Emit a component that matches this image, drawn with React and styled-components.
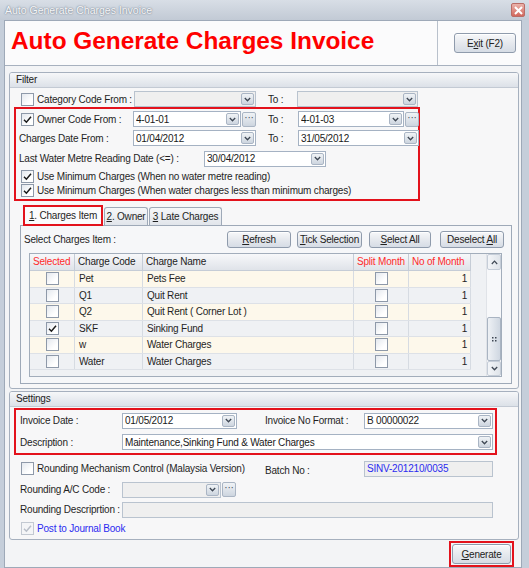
import React from 'react';
import styled, { createGlobalStyle } from 'styled-components';

const GlobalStyle = createGlobalStyle`
  html, body {
    margin: 0;
    padding: 0;
  }
  body {
    font-family: "Liberation Sans", Arial, sans-serif;
    font-size: 10px;
    letter-spacing: -0.2px;
    color: #1f1f1f;
  }
  * {
    box-sizing: border-box;
  }
`;

const items = [
  { code: 'Pet', name: 'Pets Fee', sel: false },
  { code: 'Q1', name: 'Quit Rent', sel: false },
  { code: 'Q2', name: 'Quit Rent ( Corner Lot )', sel: false },
  { code: 'SKF', name: 'Sinking Fund', sel: true },
  { code: 'w', name: 'Water Charges', sel: false },
  { code: 'Water', name: 'Water Charges', sel: false },
];

const Chevron = () => (
  <svg width="7" height="5" viewBox="0 0 7 5">
    <path d="M0.8 1 L3.5 3.8 L6.2 1" fill="none" stroke="#3f4854" strokeWidth="1.3" />
  </svg>
);

const Tick = ({ color = '#1b1b1b' }) => (
  <svg width="11" height="11" viewBox="0 0 11 11">
    <path d="M2 5.8 L4.4 8.2 L9 2.8" fill="none" stroke={color} strokeWidth="1.5" />
  </svg>
);

const CheckBox = ({ checked, disabled }) => (
  <Box $disabled={disabled}>{checked && <Tick color={disabled ? '#b8bec8' : '#1b1b1b'} />}</Box>
);

const Combo = ({ w, value, disabled, ellipsis, blue, noButton }) => (
  <ComboWrap>
    <Field $w={w} $disabled={disabled}>
      <FieldText $blue={blue}>{value}</FieldText>
      {!noButton && (
        <DropBtn>
          <Chevron />
        </DropBtn>
      )}
    </Field>
    {ellipsis && <Ellipsis>···</Ellipsis>}
  </ComboWrap>
);

const App = () => {
  return (
    <>
      <GlobalStyle />
      <Window>
        <TitleBar>
          <TitleText>Auto Generate Charges Invoice</TitleText>
          <CloseBtn>
            <svg width="9" height="9" viewBox="0 0 9 9">
              <path d="M1 1 L8 8 M8 1 L1 8" stroke="#fff" strokeWidth="2" />
            </svg>
          </CloseBtn>
        </TitleBar>

        <Client>
          <Header>
            <BigTitle>Auto Generate Charges Invoice</BigTitle>
            <ExitCell>
              <Button $w={62} $h={20}>
                <span>E<u>x</u>it (F2)</span>
              </Button>
            </ExitCell>
          </Header>

          <Content>
            <Group $h={317}>
              <GroupHeader>Filter</GroupHeader>
              <GroupBody>
                <Row $h={16} $pl={7}>
                  <LabelCell $w={113}>
                    <CheckBox />
                    <CheckText>Category Code From :</CheckText>
                  </LabelCell>
                  <Combo w={122} disabled />
                  <LabelCell $w={41} $pl={12}>To :</LabelCell>
                  <Combo w={121} disabled />
                </Row>

                <RedBox $h={94} $w={406}>
                  <Row $h={19} $pt={1}>
                    <LabelCell $w={114} $pl={2}>
                      <CheckBox checked />
                      <CheckText>Owner Code From :</CheckText>
                    </LabelCell>
                    <Combo w={108} value="4-01-01" ellipsis />
                    <LabelCell $w={42} $pl={12}>To :</LabelCell>
                    <Combo w={106} value="4-01-03" ellipsis />
                  </Row>
                  <Row $h={20}>
                    <LabelCell $w={114}>Charges Date From :</LabelCell>
                    <Combo w={123} value="01/04/2012" />
                    <LabelCell $w={42} $pl={12}>To :</LabelCell>
                    <Combo w={121} value="31/05/2012" />
                  </Row>
                  <Row $h={21}>
                    <LabelCell $w={185}>Last Water Metre Reading Date (&lt;=) :</LabelCell>
                    <Combo w={122} value="30/04/2012" />
                  </Row>
                  <Row $h={14} $pl={2}>
                    <CheckBox checked />
                    <CheckText>Use Minimum Charges (When no water metre reading)</CheckText>
                  </Row>
                  <Row $h={14} $pl={2}>
                    <CheckBox checked />
                    <CheckText>Use Minimum Charges (When water charges less than minimum charges)</CheckText>
                  </Row>
                </RedBox>

                <TabArea>
                  <TabStrip>
                    <Tab $active $w={80}>
                      <span><u>1</u>. Charges Item</span>
                    </Tab>
                    <Tab $w={44}>
                      <span><u>2</u>. Owner</span>
                    </Tab>
                    <Tab $w={73}>
                      <span><u>3</u> Late Charges</span>
                    </Tab>
                  </TabStrip>
                  <TabPanel>
                    <ToolRow>
                      <ToolLabel>Select Charges Item :</ToolLabel>
                      <Button $w={64} $h={17}>
                        <span><u>R</u>efresh</span>
                      </Button>
                      <Button $w={65} $h={17} $ml={6}>
                        <span><u>T</u>ick Selection</span>
                      </Button>
                      <Button $w={62} $h={17} $ml={7}>
                        <span><u>S</u>elect All</span>
                      </Button>
                      <Button $w={64} $h={17} $ml={9}>
                        <span>Deselect <u>A</u>ll</span>
                      </Button>
                    </ToolRow>

                    <Grid>
                      <Table>
                        <HeadRow>
                          <HeadCell $red>Selected</HeadCell>
                          <HeadCell>Charge Code</HeadCell>
                          <HeadCell>Charge Name</HeadCell>
                          <HeadCell $red>Split Month</HeadCell>
                          <HeadCell $red>No of Month</HeadCell>
                        </HeadRow>
                        {items.map((it, i) => (
                          <DataRow key={it.code} $alt={i % 2 === 1}>
                            <Cell $center>
                              <CheckBox checked={it.sel} />
                            </Cell>
                            <Cell>{it.code}</Cell>
                            <Cell>{it.name}</Cell>
                            <Cell $center>
                              <CheckBox />
                            </Cell>
                            <Cell $right>1</Cell>
                          </DataRow>
                        ))}
                      </Table>
                      <ScrollBar>
                        <ScrollBtn $h={16}>
                          <svg width="7" height="5" viewBox="0 0 7 5">
                            <path d="M0.8 4 L3.5 1.2 L6.2 4" fill="none" stroke="#3f4854" strokeWidth="1.2" />
                          </svg>
                        </ScrollBtn>
                        <Track />
                        <Thumb>
                          <svg width="5" height="5" viewBox="0 0 5 5">
                            <rect x="0" y="0" width="1.5" height="1.5" fill="#3f4854" />
                            <rect x="3" y="0" width="1.5" height="1.5" fill="#3f4854" />
                            <rect x="0" y="3" width="1.5" height="1.5" fill="#3f4854" />
                            <rect x="3" y="3" width="1.5" height="1.5" fill="#3f4854" />
                          </svg>
                        </Thumb>
                        <ScrollBtn $h={15}>
                          <Chevron />
                        </ScrollBtn>
                      </ScrollBar>
                    </Grid>
                  </TabPanel>
                </TabArea>
              </GroupBody>
            </Group>

            <Group $h={149} $mt={2}>
              <GroupHeader>Settings</GroupHeader>
              <GroupBody $pt={1}>
                <RedBox $h={47} $w={483} $pl={4}>
                  <Row $h={21}>
                    <LabelCell $w={102}>Invoice Date :</LabelCell>
                    <Combo w={115} value="01/05/2012" />
                    <LabelCell $w={127} $pl={28}>Invoice No Format :</LabelCell>
                    <Combo w={129} value="B 00000022" />
                  </Row>
                  <Row $h={22}>
                    <LabelCell $w={102}>Description :</LabelCell>
                    <Combo w={371} value="Maintenance,Sinking Fund & Water Charges" />
                  </Row>
                </RedBox>

                <Row $h={17} $mt={5} $pl={7}>
                  <LabelCell $w={244}>
                    <CheckBox />
                    <CheckText>Rounding Mechanism Control (Malaysia Version)</CheckText>
                  </LabelCell>
                  <LabelCell $w={99} $pt={4}>Batch No :</LabelCell>
                  <Combo w={129} value="SINV-201210/0035" disabled blue noButton />
                </Row>
                <Row $h={17} $mt={4} $pl={6}>
                  <LabelCell $w={102}>Rounding A/C Code :</LabelCell>
                  <Combo w={99} disabled ellipsis />
                </Row>
                <Row $h={19} $mt={2} $pl={6}>
                  <LabelCell $w={102}>Rounding Descriprtion :</LabelCell>
                  <Combo w={371} disabled noButton />
                </Row>
                <Row $h={15} $mt={2} $pl={7}>
                  <CheckBox checked disabled />
                  <CheckText $blue>Post to Journal Book</CheckText>
                </Row>
              </GroupBody>
            </Group>

            <Footer>
              <RedFrame>
                <Button $w={59} $h={20}>
                  <span><u>G</u>enerate</span>
                </Button>
              </RedFrame>
            </Footer>
          </Content>
        </Client>
      </Window>
    </>
  );
};

const Window = styled.div`
  width: 529px;
  height: 568px;
  display: flex;
  flex-direction: column;
  background: #c5ceda;
  overflow: hidden;
`;

const TitleBar = styled.div`
  height: 20px;
  flex: none;
  display: flex;
  align-items: center;
  justify-content: space-between;
  padding: 0 4px 0 5px;
  background: linear-gradient(#d8dee6, #c2cad5);
`;

const TitleText = styled.div`
  color: #f6f7f9;
  font-size: 10.5px;
  letter-spacing: 0;
  text-shadow: 0 0 2px #7e8896, 0 0 1px #7e8896;
`;

const CloseBtn = styled.div`
  width: 14px;
  height: 14px;
  display: flex;
  align-items: center;
  justify-content: center;
  border: 1px solid #b96c66;
  border-radius: 2px;
  background: linear-gradient(#eab2aa, #d2685d);
`;

const Client = styled.div`
  flex: 1;
  margin: 0 7px 3px 4px;
  border: 1px solid #9ea9b8;
  background: #f3f4f6;
  display: flex;
  flex-direction: column;
`;

const Header = styled.div`
  height: 45px;
  flex: none;
  display: flex;
  border-bottom: 1px solid #a7b1bf;
  background: #fbfbfc;
`;

const BigTitle = styled.div`
  width: 433px;
  border-right: 1px solid #b9c1cc;
  padding: 5px 0 0 6px;
  color: #ff0000;
  font-family: "Liberation Sans", Arial, sans-serif;
  font-weight: bold;
  font-size: 24.4px;
  letter-spacing: 0;
  line-height: 30px;
`;

const ExitCell = styled.div`
  flex: 1;
  display: flex;
  align-items: center;
  padding: 0 0 0 16px;
`;

const Button = styled.div`
  width: ${(p) => p.$w}px;
  height: ${(p) => p.$h}px;
  margin-left: ${(p) => p.$ml || 0}px;
  flex: none;
  display: flex;
  align-items: center;
  justify-content: center;
  border: 1px solid #8f9bac;
  border-radius: 3px;
  background: linear-gradient(#f7f8fa, #e6e9ee 50%, #d6dce5);
  box-shadow: inset 0 1px 0 #ffffff;
  color: #222;
  white-space: nowrap;
`;

const Content = styled.div`
  flex: 1;
  display: flex;
  flex-direction: column;
  padding: 6px 2px 0 4px;
`;

const Group = styled.div`
  height: ${(p) => p.$h}px;
  margin-top: ${(p) => p.$mt || 0}px;
  flex: none;
  border: 1px solid #a6b0be;
  border-radius: 3px;
  background: #f7f7f8;
  display: flex;
  flex-direction: column;
  overflow: hidden;
`;

const GroupHeader = styled.div`
  height: 15px;
  flex: none;
  padding-left: 6px;
  line-height: 14px;
  border-bottom: 1px solid #c3cad4;
  background: linear-gradient(#f6f7f9, #dce1e8);
  color: #222;
`;

const GroupBody = styled.div`
  flex: 1;
  display: flex;
  flex-direction: column;
  padding: ${(p) => (p.$pt !== undefined ? p.$pt : 3)}px 4px 0 4px;
`;

const Row = styled.div`
  height: ${(p) => p.$h}px;
  margin-top: ${(p) => p.$mt || 0}px;
  padding-left: ${(p) => p.$pl || 0}px;
  padding-top: ${(p) => p.$pt || 0}px;
  flex: none;
  display: flex;
  align-items: center;
`;

const LabelCell = styled.div`
  width: ${(p) => p.$w}px;
  padding-left: ${(p) => p.$pl || 0}px;
  padding-top: ${(p) => p.$pt || 0}px;
  flex: none;
  display: flex;
  align-items: center;
  white-space: nowrap;
`;

const CheckText = styled.span`
  margin-left: 3px;
  white-space: nowrap;
  color: ${(p) => (p.$blue ? '#2b2bf0' : 'inherit')};
`;

const Box = styled.div`
  width: 13px;
  height: 13px;
  flex: none;
  display: flex;
  align-items: center;
  justify-content: center;
  border: 1px solid ${(p) => (p.$disabled ? '#c3c9d2' : '#8e99a9')};
  background: ${(p) =>
    p.$disabled ? '#f4f5f7' : 'linear-gradient(135deg, #e4e8ee, #ffffff 70%)'};
`;

const RedBox = styled.div`
  width: ${(p) => p.$w}px;
  height: ${(p) => p.$h}px;
  flex: none;
  border: 2px solid #e3121c;
  padding: 0 0 0 ${(p) => (p.$pl !== undefined ? p.$pl : 3)}px;
  display: flex;
  flex-direction: column;
`;

const ComboWrap = styled.div`
  display: flex;
  align-items: center;
  gap: 1px;
  flex: none;
`;

const Field = styled.div`
  width: ${(p) => p.$w}px;
  height: 16px;
  display: flex;
  align-items: center;
  border: 1px solid ${(p) => (p.$disabled ? '#b9c3cf' : '#a5b2c3')};
  background: ${(p) => (p.$disabled ? '#efefef' : '#ffffff')};
  padding: 0 1px 0 2px;
`;

const FieldText = styled.span`
  flex: 1;
  overflow: hidden;
  white-space: nowrap;
  color: ${(p) => (p.$blue ? '#2b2bf0' : '#1a1a1a')};
`;

const DropBtn = styled.div`
  width: 13px;
  height: 12px;
  flex: none;
  display: flex;
  align-items: center;
  justify-content: center;
  border: 1px solid #aab5c4;
  border-radius: 2px;
  background: linear-gradient(#f0f3f6, #cdd5df);
`;

const Ellipsis = styled.div`
  width: 14px;
  height: 15px;
  display: flex;
  justify-content: center;
  line-height: 9px;
  font-size: 10px;
  color: #454d58;
  border: 1px solid #aab5c4;
  border-radius: 2px;
  background: linear-gradient(#f0f3f6, #cdd5df);
`;

const TabArea = styled.div`
  margin: 3px 2px 0 6px;
  display: flex;
  flex-direction: column;
`;

const TabStrip = styled.div`
  height: 21px;
  display: flex;
  align-items: flex-end;
  gap: 1px;
  padding-left: 3px;
`;

const Tab = styled.div`
  width: ${(p) => p.$w}px;
  height: ${(p) => (p.$active ? 21 : 18)}px;
  display: flex;
  align-items: center;
  justify-content: center;
  white-space: nowrap;
  margin-bottom: ${(p) => (p.$active ? -1 : 0)}px;
  border: ${(p) => (p.$active ? '2px solid #e3121c' : '1px solid #9ea9b8')};
  border-bottom: ${(p) => (p.$active ? '2px solid #e3121c' : 'none')};
  border-radius: ${(p) => (p.$active ? '0' : '3px 3px 0 0')};
  background: ${(p) => (p.$active ? '#fbfbfc' : 'linear-gradient(#f6f7f9, #e1e5eb)')};
  position: relative;
  z-index: ${(p) => (p.$active ? 1 : 0)};
`;

const TabPanel = styled.div`
  height: 159px;
  border: 1px solid #9ea9b8;
  background: #f6f7f9;
  padding: 5px 0 0 3px;
`;

const ToolRow = styled.div`
  height: 17px;
  display: flex;
  align-items: center;
`;

const ToolLabel = styled.div`
  width: 203px;
  white-space: nowrap;
`;

const Grid = styled.div`
  width: 473px;
  height: 124px;
  margin: 5px 0 0 5px;
  border: 1px solid #a2adbb;
  background: #eff1f4;
  display: flex;
`;

const Table = styled.div`
  width: 441px;
  display: flex;
  flex-direction: column;
`;

const cols = '45px 68px 211px 55px 62px';

const HeadRow = styled.div`
  height: 17px;
  display: grid;
  grid-template-columns: ${cols};
  background: linear-gradient(#f7f8fa, #dfe3e9);
  border-bottom: 1px solid #c5ccd6;
`;

const HeadCell = styled.div`
  padding-left: 3px;
  line-height: 16px;
  white-space: nowrap;
  overflow: hidden;
  border-right: 1px solid #c5ccd6;
  color: ${(p) => (p.$red ? '#ff2b2b' : '#222')};
`;

const DataRow = styled.div`
  height: 16.5px;
  display: grid;
  grid-template-columns: ${cols};
  background: ${(p) => (p.$alt ? '#eff1f4' : '#fdf8eb')};
  border-bottom: 1px solid #dde1e7;
`;

const Cell = styled.div`
  display: flex;
  align-items: center;
  justify-content: ${(p) => (p.$center ? 'center' : p.$right ? 'flex-end' : 'flex-start')};
  padding: 0 3px 0 4px;
  border-right: 1px solid #d6dbe2;
  white-space: nowrap;
  overflow: hidden;
`;

const ScrollBar = styled.div`
  width: 15px;
  margin-left: auto;
  display: flex;
  flex-direction: column;
  background: #f4f5f7;
  border-left: 1px solid #e0e3e8;
`;

const ScrollBtn = styled.div`
  height: ${(p) => p.$h}px;
  flex: none;
  display: flex;
  align-items: center;
  justify-content: center;
  border: 1px solid #c5cdd8;
  border-radius: 2px;
  background: linear-gradient(90deg, #f3f5f8, #dfe4ea);
`;

const Track = styled.div`
  height: 47px;
  flex: none;
  background: #f7f8fa;
`;

const Thumb = styled.div`
  height: 44px;
  flex: none;
  display: flex;
  align-items: center;
  justify-content: center;
  border: 1px solid #a9b4c2;
  border-radius: 2px;
  background: linear-gradient(90deg, #eef1f5, #cfd7e1);
`;

const Footer = styled.div`
  display: flex;
  justify-content: flex-end;
  padding: 1px 5px 0 0;
`;

const RedFrame = styled.div`
  border: 2px solid #e3121c;
  padding: 1px;
  display: flex;
`;

export default App;
